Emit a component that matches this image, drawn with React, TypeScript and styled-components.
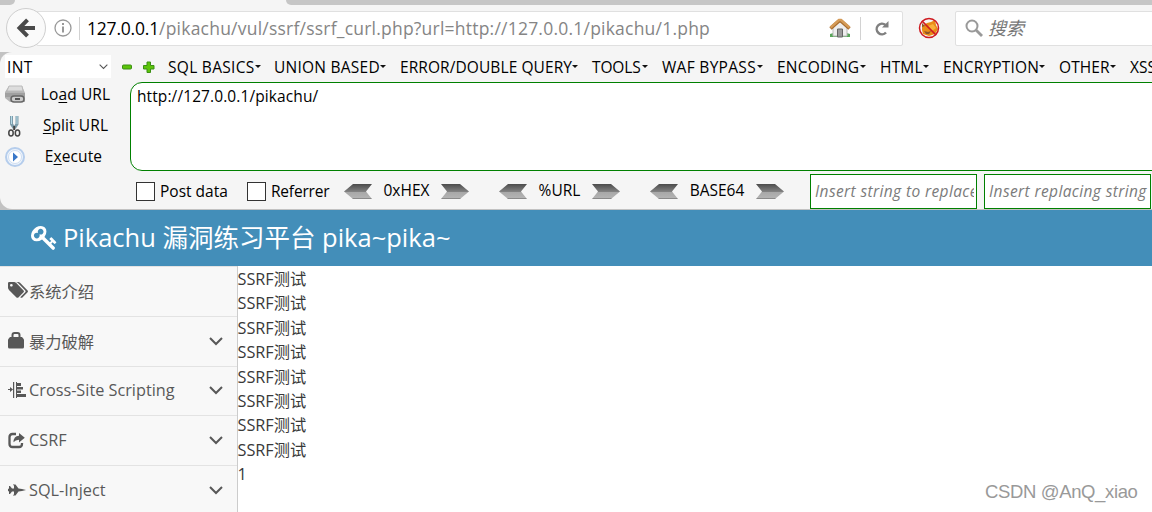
import React from 'react'
import styled, { createGlobalStyle } from 'styled-components'

const GlobalStyle = createGlobalStyle`
  * {
    box-sizing: border-box;
  }

  body {
    margin: 0;
    background: #fff;
    overflow: hidden;
    font-family: 'Open Sans', 'Noto Sans CJK SC', sans-serif;
  }

  svg {
    display: block;
    flex: none;
  }
`

const Page = styled.div`
  width: 1152px;
  height: 512px;
  overflow: hidden;
  position: relative;
`

/* browser chrome */

const TabStrip = styled.div`
  height: 5px;
  display: flex;
  justify-content: space-between;
  background: #f5f5f5;
`

const InactiveTab = styled.div<{ $width: number; $side: 'left' | 'right' }>`
  width: ${({ $width }) => $width}px;
  background: #c6c6c6;
  border-radius: ${({ $side }) => ($side === 'left' ? '0 0 12px 0' : '0 0 0 12px')};
`

const NavBar = styled.div`
  height: 47px;
  display: flex;
  align-items: center;
  padding: 0 0 1px 6px;
  background: #f5f5f5;
`

const BackButton = styled.div`
  width: 40px;
  height: 40px;
  flex: none;
  display: flex;
  align-items: center;
  justify-content: center;
  border: 1px solid #cfcfcf;
  border-radius: 50%;
  background: #fafafa;
  z-index: 1;
`

const AddressField = styled.div`
  width: 867px;
  height: 35px;
  flex: none;
  display: flex;
  align-items: center;
  margin-left: -10px;
  padding-left: 17px;
  border: 1px solid #e0e0e0;
  border-radius: 2px;
  background: #fff;
`

const FieldDivider = styled.div<{ $left: number; $right: number }>`
  width: 1px;
  height: 23px;
  margin: 0 ${({ $right }) => $right}px 0 ${({ $left }) => $left}px;
  background: #d2d2d2;
`

const Address = styled.div`
  width: 742px;
  color: #858585;
  font-size: 17.5px;
  letter-spacing: 0.22px;
  line-height: 30px;
  white-space: nowrap;
`

const Host = styled.span`
  color: #000;
  letter-spacing: -0.2px;
`

const BlockedFox = styled.div`
  margin: 0 15px;
`

const SearchField = styled.div`
  width: 220px;
  height: 35px;
  flex: none;
  display: flex;
  align-items: center;
  gap: 5px;
  padding-left: 9px;
  border: 1px solid #e0e0e0;
  border-radius: 2px;
  background: #fff;
  color: #777;
  font-size: 18px;
  font-style: italic;
  line-height: 30px;
`

/* hackbar */

const HackbarBack = styled.div`
  height: 158px;
  background: #c2c2c2;
`

const Hackbar = styled.div`
  height: 157px;
  border-radius: 12px 0 0 12px;
  background: #f5f5f5;
  color: #000;
  font-size: 15.5px;
  white-space: nowrap;
`

const MenuRow = styled.div`
  height: 30px;
  display: flex;
  align-items: center;
  padding: 0 0 1px 5px;
`

const ModeSelect = styled.div`
  width: 106px;
  height: 23px;
  flex: none;
  display: flex;
  align-items: center;
  justify-content: space-between;
  margin-right: 11px;
  padding: 0 3px 0 2px;
  background: #fff;
  letter-spacing: 0.4px;
`

const Menus = styled.div`
  display: flex;
  gap: 14px;
  margin-left: 13px;
`

const Menu = styled.div<{ $width: number; $spacing: number }>`
  width: ${({ $width }) => $width}px;
  flex: none;
  display: flex;
  align-items: center;
  justify-content: space-between;
  letter-spacing: ${({ $spacing }) => $spacing}px;
`

const Caret = styled.i`
  flex: none;
  border: 3px solid transparent;
  border-top-color: #111;
  border-bottom: 0;
`

const HackBody = styled.div`
  height: 90px;
  display: flex;
`

const Actions = styled.div`
  width: 130px;
  flex: none;
`

const Action = styled.div<{ $shift?: number }>`
  height: 31px;
  display: flex;
  align-items: center;
  padding: 0 9px 6px 5px;

  span {
    flex: 1;
    padding-left: 5px;
    padding-right: ${({ $shift }) => $shift || 0}px;
    padding-bottom: 2px;
    letter-spacing: 0.1px;
    text-align: center;
  }

  u {
    text-underline-offset: 2px;
  }
`

const UrlArea = styled.div`
  width: 1040px;
  height: 89px;
  flex: none;
  padding: 2px 6px;
  border: 1px solid #008000;
  border-radius: 12px;
  background: #fff;
  letter-spacing: 0.1px;
  line-height: 22px;
`

const ToolsRow = styled.div`
  height: 37px;
  display: flex;
  align-items: center;
  padding: 1px 0 0 136px;
`

const Check = styled.div<{ $width: number; $spacing: number }>`
  width: ${({ $width }) => $width}px;
  flex: none;
  display: flex;
  align-items: center;
  gap: 5px;
  letter-spacing: ${({ $spacing }) => $spacing}px;

  &::before {
    content: '';
    width: 17px;
    height: 17px;
    border: 1px solid #333;
    background: #fff;
  }
`

const Codec = styled.div<{ $width: number; $gap: number }>`
  width: ${({ $width }) => $width}px;
  flex: none;
  display: flex;
  align-items: center;
  justify-content: space-between;
  margin-right: ${({ $gap }) => $gap}px;
  padding-bottom: 2px;

  svg {
    margin-top: 3px;
  }
`

const ReplaceInput = styled.div`
  width: 167px;
  height: 35px;
  flex: none;
  margin-right: 7px;
  padding: 0 2px 0 4px;
  border: 1px solid #008000;
  background: #fff;
  color: #7b7b7b;
  font-style: italic;
  letter-spacing: 0.38px;
  line-height: 33px;

  div {
    overflow: hidden;
  }
`

/* pikachu page */

const Header = styled.div`
  height: 56px;
  display: flex;
  align-items: center;
  gap: 5px;
  padding: 0 0 2px 31px;
  background: #438eb9;
  color: #fff;
  font-size: 25.5px;
  line-height: 54px;
  white-space: nowrap;
`

const Main = styled.div`
  height: 246px;
  display: flex;
`

const Sidebar = styled.div`
  width: 238px;
  flex: none;
  overflow: hidden;
  border-right: 1px solid #ccc;
  background: #f8f8f8;
`

const NavItem = styled.div`
  height: 49.8px;
  display: flex;
  align-items: center;
  padding: 0 14px 1px 8px;
  border-top: 1px solid #e3e3e3;
  color: #585858;
  font-size: 16.25px;

  > svg {
    margin-left: auto;
  }
`

const NavIcon = styled.div`
  width: 21px;
  flex: none;
`

const Content = styled.div`
  flex: 1;
  margin-left: -0.5px;
  padding-top: 1px;
  color: #393939;
  font-size: 16.25px;
  line-height: 24.375px;
`

const Watermark = styled.div`
  position: absolute;
  left: 985px;
  top: 481px;
  color: #999;
  font-family: 'Liberation Sans', sans-serif;
  font-size: 18.5px;
  letter-spacing: -0.36px;
  line-height: 22px;
  text-shadow: 1px 1px 0 #fff;
  white-space: nowrap;
`

const menus = [
  { label: 'SQL BASICS', width: 92, spacing: 0.3 },
  { label: 'UNION BASED', width: 112, spacing: 0.25 },
  { label: 'ERROR/DOUBLE QUERY', width: 178, spacing: 0.08 },
  { label: 'TOOLS', width: 56, spacing: -0.15 },
  { label: 'WAF BYPASS', width: 101, spacing: 0.3 },
  { label: 'ENCODING', width: 89, spacing: 0.2 },
  { label: 'HTML', width: 49, spacing: 0.2 },
  { label: 'ENCRYPTION', width: 102, spacing: 0.2 },
  { label: 'OTHER', width: 57, spacing: 0.1 },
  { label: 'XSS', width: 40, spacing: 0 }
]

const codecs = [
  { label: '0xHEX', width: 125, gap: 30 },
  { label: '%URL', width: 121, gap: 30 },
  { label: 'BASE64', width: 134, gap: 26 }
]

const Chevron = ({ size, color, weight }: { size: number; color: string; weight: number }) => (
  <svg width={size} height={size} viewBox='0 0 14 14' fill='none' stroke={color} strokeWidth={weight}>
    <path d='M1 4l6 6 6-6' />
  </svg>
)

const Arrow = ({ flip }: { flip?: boolean }) => (
  <svg width='28' height='15' viewBox='0 0 28 15'>
    <defs>
      <linearGradient id='steel' x1='0' y1='0' x2='0' y2='1'>
        <stop offset='0' stopColor='#4c4c4c' />
        <stop offset='0.5' stopColor='#808080' />
        <stop offset='0.55' stopColor='#a8a8a8' />
        <stop offset='0.9' stopColor='#b2b2b2' />
        <stop offset='1' stopColor='#777' />
      </linearGradient>
    </defs>
    <path
      d={flip ? 'M28 0H9L0 7.500 9 15h19l-6-7.500z' : 'M0 0h19l9 7.500L19 15H0l6-7.500z'}
      fill='url(#steel)'
    />
  </svg>
)

const KeyIcon = () => (
  <svg width='27' height='27' viewBox='0 0 1792 1792' fill='currentColor'>
    <path d='M832 512q0-80-56-136t-136-56-136 56-56 136q0 42 19 83-41-19-83-19-80 0-136 56t-56 136 56 136 136 56 136-56 56-136q0-42-19-83 41 19 83 19 80 0 136-56t56-136zm851 704q0 17-49 66t-66 49q-9 0-28.5-16t-36.5-33-38.5-40-24.5-26l-96 96 220 220q28 28 28 68 0 42-39 81t-81 39q-40 0-68-28l-671-671q-176 131-365 131-163 0-265.5-102.5t-102.5-265.5q0-160 95-313t248-248 313-95q163 0 265.5 102.5t102.5 265.5q0 189-131 365l355 355 96-96q-3-3-26-24.5t-40-38.5-33-36.5-16-28.5q0-17 49-66t66-49q13 0 23 10 6 6 46 44.5t82 79.5 86.5 86 73 78 28.5 41z' />
  </svg>
)

const TagsIcon = () => (
  <svg width='20' height='18' viewBox='128 192 1900 1600' fill='currentColor'>
    <path d='M576 448q0-53-37.5-90.5t-90.5-37.5-90.5 37.5-37.5 90.5 37.5 90.5 90.5 37.5 90.5-37.5 37.5-90.5zm1067 576q0 53-37 90l-491 492q-39 37-91 37-53 0-90-37l-715-716q-38-37-64.5-101t-26.5-117v-416q0-52 38-90t90-38h416q53 0 117 26.5t102 64.5l715 714q37 39 37 91zm384 0q0 53-37 90l-491 492q-39 37-91 37-36 0-59-14t-53-45l470-470q37-37 37-90 0-52-37-91l-715-714q-38-38-102-64.5t-117-26.5h224q53 0 117 26.5t102 64.5l715 714q37 39 37 91z' />
  </svg>
)

const LockIcon = () => (
  <svg width='16' height='18' viewBox='0 0 16 18'>
    <path d='M4.500 6V3q0-2 2-2h3q2 0 2 2v3' fill='none' stroke='currentColor' strokeWidth='2' />
    <path d='M2 5h12l2 2.500V15q0 1.500-1.500 1.500h-13Q0 16.500 0 15V7.500z' fill='currentColor' />
  </svg>
)

const IndentIcon = () => (
  <svg width='18' height='16' viewBox='0 0 18 16' fill='currentColor'>
    <path d='M0 7h2V5l3 2.500L2 10V8H0zM5 0h1.200v16H5zM8 0h1v16H8zM9 1h4v3H9zM9 5h6v2.500H9zM9 8.500h4v2.500H9zM9 12h9v3H9z' />
  </svg>
)

const ShareIcon = () => (
  <svg width='17' height='17' viewBox='0 0 17 17'>
    <path d='M8 2H4.500Q1.500 2 1.500 5v7q0 3 3 3H11q3 0 3-3v-1' fill='none' stroke='currentColor' strokeWidth='2.300' />
    <path d='M11 1l5.800 4.800L11 10.500V7.800q-3.800 0-5.500 2.500Q5.500 4 11 3.700z' fill='currentColor' />
  </svg>
)

const JetIcon = () => (
  <svg width='18' height='12' viewBox='0 0 18 12' fill='currentColor'>
    <path d='M1 2h1l2 2.500h2V1.500L5 1V.5h2.500l3 4L14 5l4 1-4 1-3.500.5-3 4H5V11l1-.5v-3H4L2 10H1V7.500L0 7V5l1-.5z' />
  </svg>
)

const navItems = [
  { label: '系统介绍', icon: <TagsIcon />, closed: false },
  { label: '暴力破解', icon: <LockIcon />, closed: true },
  { label: 'Cross-Site Scripting', icon: <IndentIcon />, closed: true },
  { label: 'CSRF', icon: <ShareIcon />, closed: true },
  { label: 'SQL-Inject', icon: <JetIcon />, closed: true }
]

const BackIcon = () => (
  <svg width='20' height='20' viewBox='0 0 20 20' fill='none' stroke='#4a4a4a' strokeWidth='4'>
    <path d='M19 10H5M11.500 1.800L3.500 10l8 8.200' />
  </svg>
)

const InfoIcon = () => (
  <svg width='18' height='18' viewBox='0 0 18 18' fill='none' stroke='#999'>
    <circle cx='9' cy='9' r='8' strokeWidth='1.300' />
    <path d='M9 7.500v6M9 4v2' strokeWidth='2' />
  </svg>
)

const HomeIcon = () => (
  <svg width='22' height='20' viewBox='0 0 22 20'>
    <path d='M1 16q5-2 10-1 5-1 10 1v3H1z' fill='#59a65b' />
    <path d='M4 9l7-6 7 6v9H4z' fill='#eee' stroke='#bbb' />
    <path d='M8.500 11h5v8h-5z' fill='#999' stroke='#666' />
    <path d='M1.500 10.500L10 3h2l8.500 7.500' fill='none' stroke='#a86c2d' strokeWidth='3.500' />
    <path d='M1.500 9.500L10 2h2l8.500 7.500' fill='none' stroke='#d59b57' strokeWidth='2.500' />
  </svg>
)

const ReloadIcon = () => (
  <svg width='16' height='16' viewBox='0 0 16 16'>
    <path d='M12 12.500A5.300 5.300 0 1 1 11.500 5' fill='none' stroke='#808080' strokeWidth='2.500' />
    <path d='M14.500 1v6.500H8z' fill='#808080' />
  </svg>
)

const FoxIcon = () => (
  <svg width='22' height='22' viewBox='0 0 22 22'>
    <path d='M4 9l5-3 4-1 4-2 1 5 2 4-3 5-6 2-6-2-1-4z' fill='#e98b16' />
    <path d='M10 9l5-2 3 4-4 3z' fill='#f8b03a' />
    <path d='M6 14l4 1 3-1-2 3H8zM4 6l3 3-3 1z' fill='#8d562c' />
    <circle cx='11' cy='11' r='9.500' fill='none' stroke='#cf1a20' strokeWidth='1.500' />
    <path d='M4 4l14 14' stroke='#cf1a20' strokeWidth='1.700' />
  </svg>
)

const SearchIcon = () => (
  <svg width='18' height='18' viewBox='0 0 18 18' fill='none' stroke='#999'>
    <circle cx='7' cy='7' r='5.500' strokeWidth='2' />
    <path d='M11 11l6 6' strokeWidth='2.800' />
  </svg>
)

const PlusMinus = () => (
  <svg width='33' height='12' viewBox='0 0 33 12' fill='#5cc40a' stroke='#3b8f14'>
    <rect x='0.500' y='4' width='9' height='4' rx='1' />
    <path d='M25 1h3.500v3.500H32V8h-3.500v3.500H25V8h-3.500V4.500H25z' />
  </svg>
)

const LoadIcon = () => (
  <svg width='20' height='19' viewBox='0 0 20 19'>
    <path d='M4 1h13l3 7v9H5l-5-4V7z' fill='#b5b5b5' />
    <path d='M4 1h13l1 5H2z' fill='#ddd' stroke='#bbb' />
    <path d='M0 8h20v4H0z' fill='#a0a0a0' />
    <rect x='6' y='11' width='13' height='6' rx='3' fill='#ccc' stroke='#666' strokeWidth='1.500' />
    <path d='M10 14h5' stroke='#555' strokeWidth='2' />
  </svg>
)

const SplitIcon = () => (
  <svg width='20' height='22' viewBox='0 0 20 22' fill='none'>
    <path d='M6.500 1v8l2.500 4M12 1v8l-2.500 4' stroke='#7e9dab' strokeWidth='3' />
    <path d='M6.500 1v8M12 1v8' stroke='#b7dbe8' />
    <path d='M9.200 11v4' stroke='#444' strokeWidth='2' />
    <ellipse cx='6' cy='18' rx='2.200' ry='3' stroke='#444' strokeWidth='1.500' />
    <ellipse cx='12.500' cy='18' rx='2.200' ry='3' stroke='#444' strokeWidth='1.500' />
  </svg>
)

const ExecuteIcon = () => (
  <svg width='20' height='20' viewBox='0 0 20 20'>
    <circle cx='10' cy='10' r='9' fill='#eef4fb' stroke='#b5cdec' strokeWidth='2' />
    <circle cx='10' cy='10' r='6.500' fill='#fff' stroke='#cfdef2' />
    <path d='M8 5.500l5 4.500-5 4.500z' fill='#3977c8' />
  </svg>
)

export default function App(): JSX.Element {
  return (
    <Page>
      <GlobalStyle />
      <TabStrip>
        <InactiveTab $width={15} $side='left' />
        <InactiveTab $width={866} $side='right' />
      </TabStrip>
      <NavBar>
        <BackButton>
          <BackIcon />
        </BackButton>
        <AddressField>
          <InfoIcon />
          <FieldDivider $left={7} $right={7} />
          <Address>
            <Host>127.0.0.1</Host>/pikachu/vul/ssrf/ssrf_curl.php?url=http://127.0.0.1/pikachu/1.php
          </Address>
          <HomeIcon />
          <FieldDivider $left={9} $right={13} />
          <ReloadIcon />
        </AddressField>
        <BlockedFox>
          <FoxIcon />
        </BlockedFox>
        <SearchField>
          <SearchIcon />
          搜索
        </SearchField>
      </NavBar>

      <HackbarBack>
        <Hackbar>
          <MenuRow>
            <ModeSelect>
              INT
              <Chevron size={9} color='#555' weight={1.6} />
            </ModeSelect>
            <PlusMinus />
            <Menus>
              {menus.map(({ label, width, spacing }) => (
                <Menu key={label} $width={width} $spacing={spacing}>
                  {label}
                  {label !== 'XSS' && <Caret />}
                </Menu>
              ))}
            </Menus>
          </MenuRow>
          <HackBody>
            <Actions>
              <Action>
                <LoadIcon />
                <span>
                  Lo<u>a</u>d URL
                </span>
              </Action>
              <Action>
                <SplitIcon />
                <span>
                  <u>S</u>plit URL
                </span>
              </Action>
              <Action $shift={4}>
                <ExecuteIcon />
                <span>
                  E<u>x</u>ecute
                </span>
              </Action>
            </Actions>
            <UrlArea>http://127.0.0.1/pikachu/</UrlArea>
          </HackBody>
          <ToolsRow>
            <Check $width={111} $spacing={0}>
              Post data
            </Check>
            <Check $width={97} $spacing={-0.2}>
              Referrer
            </Check>
            {codecs.map(({ label, width, gap }) => (
              <Codec key={label} $width={width} $gap={gap}>
                <Arrow flip />
                {label}
                <Arrow />
              </Codec>
            ))}
            <ReplaceInput>
              <div>Insert string to replace</div>
            </ReplaceInput>
            <ReplaceInput>
              <div>Insert replacing string</div>
            </ReplaceInput>
          </ToolsRow>
        </Hackbar>
      </HackbarBack>

      <Header>
        <KeyIcon />
        Pikachu 漏洞练习平台 pika~pika~
      </Header>
      <Main>
        <Sidebar>
          {navItems.map(({ label, icon, closed }) => (
            <NavItem key={label}>
              <NavIcon>{icon}</NavIcon>
              {label}
              {closed && <Chevron size={14} color='#585858' weight={2} />}
            </NavItem>
          ))}
        </Sidebar>
        <Content>
          {Array.from({ length: 8 }, (_, i) => (
            <div key={i}>SSRF测试</div>
          ))}
          <div>1</div>
        </Content>
      </Main>
      <Watermark>CSDN @AnQ_xiao</Watermark>
    </Page>
  )
}
